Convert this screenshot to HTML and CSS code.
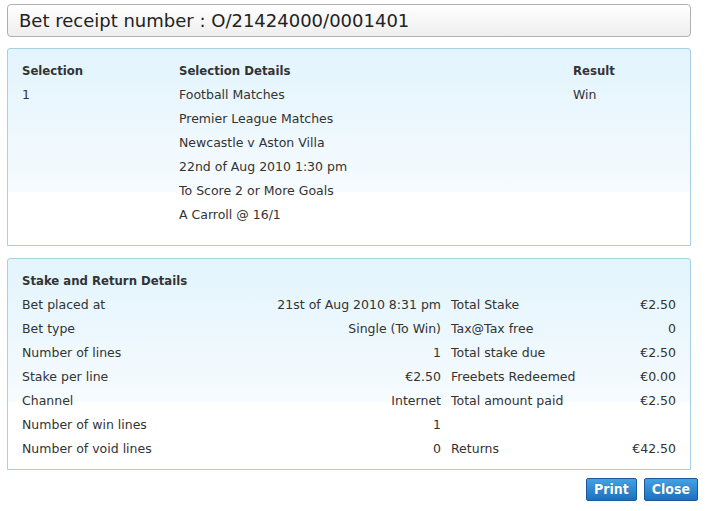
FILE: index.html
```html
<!DOCTYPE html>
<html>
<head>
<meta charset="utf-8">
<link rel="stylesheet" href="styles.css">
</head>
<body>
<div class="wrap">
  <div class="receipt-head">Bet receipt number : O/21424000/0001401</div>

  <div class="panel sel-panel">
    <div class="sel-grid">
      <div class="b">Selection</div>
      <div class="b">Selection Details</div>
      <div class="b">Result</div>
      <div>1</div>
      <div class="details">
        <div>Football Matches</div>
        <div>Premier League Matches</div>
        <div>Newcastle v Aston Villa</div>
        <div>22nd of Aug 2010 1:30 pm</div>
        <div>To Score 2 or More Goals</div>
        <div>A Carroll @ 16/1</div>
      </div>
      <div>Win</div>
    </div>
  </div>

  <div class="panel stake-panel">
    <div class="b stake-title">Stake and Return Details</div>
    <div class="stake-grid">
      <div>Bet placed at</div><div class="r">21st of Aug 2010 8:31 pm</div><div class="l2">Total Stake</div><div class="r">€2.50</div>
      <div>Bet type</div><div class="r">Single (To Win)</div><div class="l2">Tax@Tax free</div><div class="r">0</div>
      <div>Number of lines</div><div class="r">1</div><div class="l2">Total stake due</div><div class="r">€2.50</div>
      <div>Stake per line</div><div class="r">€2.50</div><div class="l2">Freebets Redeemed</div><div class="r">€0.00</div>
      <div>Channel</div><div class="r">Internet</div><div class="l2">Total amount paid</div><div class="r">€2.50</div>
      <div>Number of win lines</div><div class="r">1</div><div class="l2"></div><div></div>
      <div>Number of void lines</div><div class="r">0</div><div class="l2">Returns</div><div class="r">€42.50</div>
    </div>
  </div>

  <div class="actions">
    <button class="btn">Print</button>
    <button class="btn">Close</button>
  </div>
</div>
</body>
</html>
```

FILE: styles.css
```css
html, body {
  margin: 0;
  padding: 0;
  background: #fff;
}
body {
  font-family: "DejaVu Sans", sans-serif;
  font-size: 12.5px;
  color: #333;
}
.wrap {
  padding: 4px 18px 0 7px;
  display: flex;
  flex-direction: column;
}
.receipt-head {
  height: 31px;
  border: 1px solid #b0b0b0;
  border-radius: 4px;
  background: linear-gradient(#ffffff, #eeeeee);
  font-size: 18px;
  color: #222;
  padding-left: 11px;
  line-height: 31px;
}
.panel {
  border: 1px solid #a9d0e2;
  border-radius: 3px 3px 0 0;
  background: linear-gradient(#e2f4fd, #f6fbfe 143px, #ffffff 143px);
  box-sizing: border-box;
}
.b {
  font-family: "DejaVu Sans Condensed", "DejaVu Sans", sans-serif;
  font-weight: bold;
  font-size: 13px;
}
.sel-panel {
  height: 198px;
  margin-top: 11px;
  padding: 10px 0 0 14px;
}
.sel-grid {
  display: grid;
  grid-template-columns: 157px 394px auto;
  line-height: 24px;
}
.stake-panel {
  height: 212px;
  margin-top: 12px;
  padding: 10px 14px 0 14px;
  line-height: 24px;
}
.stake-grid {
  display: grid;
  grid-template-columns: 200px 219px 150px 85px;
}
.l2 { padding-left: 10px; }
.r { text-align: right; }
.actions {
  display: flex;
  justify-content: flex-end;
  gap: 7px;
  margin-top: 8px;
  margin-right: -7px;
}
.btn {
  font-family: "DejaVu Sans Condensed", "DejaVu Sans", sans-serif;
  font-weight: bold;
  font-size: 14px;
  color: #fff;
  height: 23px;
  padding: 0 7px;
  border: 1px solid #1a5a9a;
  border-radius: 2px;
  background: linear-gradient(#44a2e4, #1c70bf);
  text-shadow: 0 0 1px #1d5f98;
  line-height: 19px;
}
```
